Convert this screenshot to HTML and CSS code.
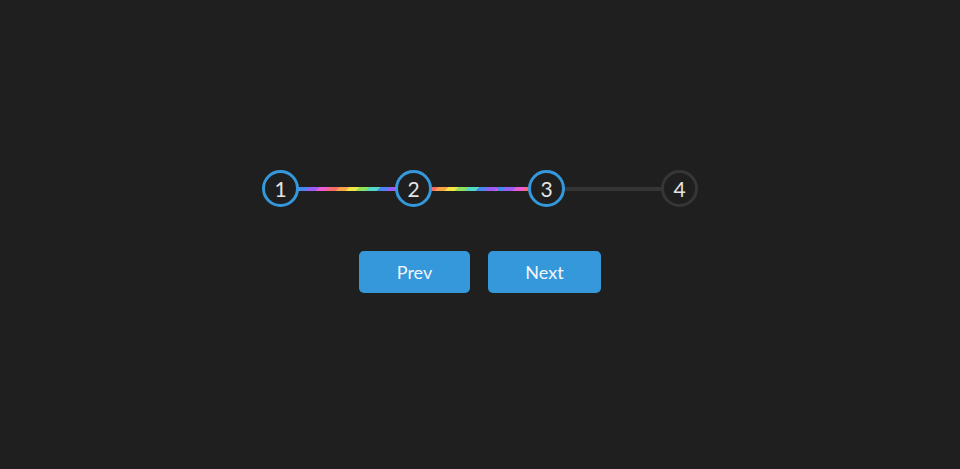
FILE: index.html
```html
<!DOCTYPE html>
<html lang="en">
<head>
<meta charset="utf-8">
<title>Stepper</title>
<link rel="stylesheet" href="styles.css">
</head>
<body>
<main class="wrap">
  <div class="stepper">
    <div class="step active">1</div>
    <div class="bar done"></div>
    <div class="step active">2</div>
    <div class="bar done"></div>
    <div class="step active">3</div>
    <div class="bar"></div>
    <div class="step">4</div>
  </div>
  <div class="actions">
    <button class="btn btn-prev">Prev</button>
    <button class="btn btn-next">Next</button>
  </div>
</main>
</body>
</html>
```
FILE: styles.css
```css
html, body {
  margin: 0;
  padding: 0;
  background: #1f1f1f;
}
body {
  height: 469px;
  display: flex;
  align-items: center;
  justify-content: center;
  font-family: "Lato", "Open Sans", sans-serif;
  padding-bottom: 6px;
  box-sizing: border-box;
}
.wrap {
  display: flex;
  flex-direction: column;
  align-items: center;
  gap: 44px;
}
.stepper {
  display: flex;
  align-items: center;
}
.step {
  width: 37px;
  height: 37px;
  box-sizing: border-box;
  border: 3px solid #363636;
  border-radius: 50%;
  display: flex;
  align-items: center;
  justify-content: center;
  color: #e4e4e4;
  font-size: 21px;
  line-height: 1;
  position: relative;
  z-index: 1;
  background: #1f1f1f;
}
.step.active {
  border-color: #3498db;
}
.bar {
  width: 98px;
  height: 4px;
  margin: 0 -1px;
  background: #353535;
}
.bar.done {
  background: repeating-linear-gradient(135deg,
    #4a86f0 0 7px,
    #9a5df5 7px 14px,
    #ec5bd2 14px 21px,
    #f76b6b 21px 28px,
    #f9a444 28px 35px,
    #f2e647 35px 42px,
    #8fe35c 42px 49px,
    #52d9c6 49px 56.57px);
  background-position: 2px 0;
}
.bar.done + .step + .bar.done {
  background-position: -130px 0;
}
.actions {
  display: flex;
  gap: 18px;
}
.btn {
  height: 42px;
  border: none;
  border-radius: 5px;
  background: #3498db;
  color: #f2f6fa;
  font-family: "Lato", "Open Sans", sans-serif;
  font-size: 18px;
  padding: 0 36px;
  cursor: pointer;
}
.btn-prev { width: 111px; }
.btn-next { width: 113px; }
```
